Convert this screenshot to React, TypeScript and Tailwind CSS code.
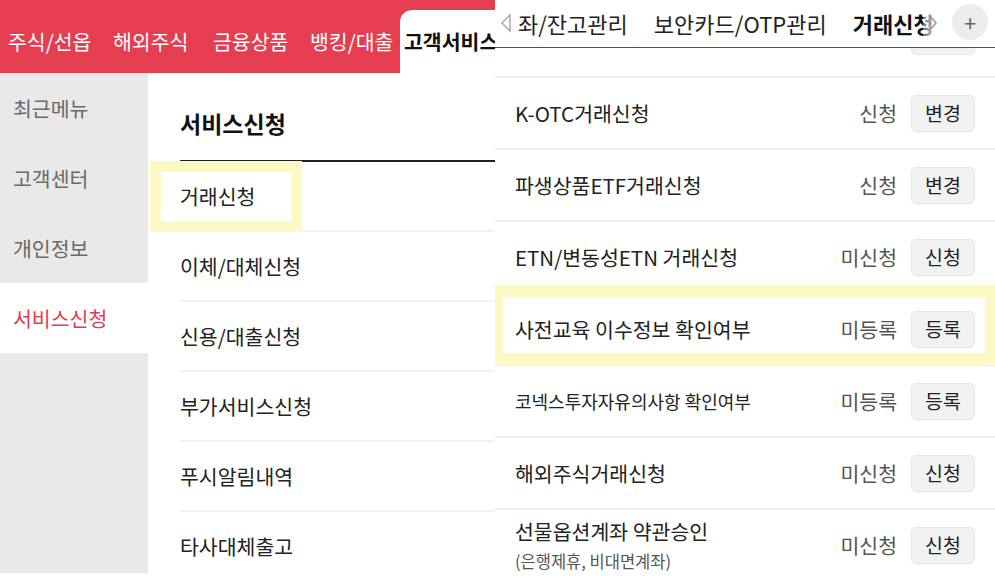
const topTabs = [
  { label: '주식/선옵', w: 'w-[105px]' },
  { label: '해외주식', w: 'w-[100px]' },
  { label: '금융상품', w: 'w-[97px]' },
  { label: '뱅킹/대출', w: 'w-[90px]' },
];
const sideMenu = ['최근메뉴', '고객센터', '개인정보', '서비스신청'];
const serviceMenu = ['거래신청', '이체/대체신청', '신용/대출신청', '부가서비스신청', '푸시알림내역', '타사대체출고'];

interface Row {
  name: string;
  status: string;
  btn: string;
  sub?: string;
  small?: boolean;
}

const rows: Row[] = [
  { name: '해외선물옵션거래신청', status: '신청', btn: '변경' },
  { name: 'K-OTC거래신청', status: '신청', btn: '변경' },
  { name: '파생상품ETF거래신청', status: '신청', btn: '변경' },
  { name: 'ETN/변동성ETN 거래신청', status: '미신청', btn: '신청' },
  { name: '사전교육 이수정보 확인여부', status: '미등록', btn: '등록' },
  { name: '코넥스투자자유의사항 확인여부', status: '미등록', btn: '등록', small: true },
  { name: '해외주식거래신청', status: '미신청', btn: '신청' },
  { name: '선물옵션계좌 약관승인', sub: '(은행제휴, 비대면계좌)', status: '미신청', btn: '신청' },
];

function LeftPanel() {
  return (
    <div className="relative w-[495px] shrink-0 flex flex-col overflow-hidden">
      {/* red top menu */}
      <div className="h-[73px] bg-[#e53e51] flex items-end pl-[8px] shrink-0">
        <div className="flex items-center h-[63px] text-white text-[20.5px] shrink-0">
          {topTabs.map((t) => (
            <span key={t.label} className={`${t.w} whitespace-nowrap`}>{t.label}</span>
          ))}
        </div>
        <div className="h-[63px] w-[140px] shrink-0 bg-white rounded-tl-[12px] flex items-center pl-[4px] text-[20.5px] font-bold text-[#111] whitespace-nowrap">
          고객서비스
        </div>
      </div>

      <div className="flex h-[500px]">
        <div className="w-[148px] shrink-0 bg-[#e9e9e9] flex flex-col">
          {sideMenu.map((m) => (
            <div
              key={m}
              className={`h-[70px] flex items-center pl-[13px] text-[20.5px] ${m === '서비스신청' ? 'bg-white text-[#e23c50]' : 'text-[#6a6a6a]'}`}
            >
              {m}
            </div>
          ))}
        </div>

        <div className="flex-1 pl-[32px]">
          <div className="h-[87px] flex items-center pt-[14px] text-[23px] font-bold text-[#111]">서비스신청</div>
          <div className="border-t-2 border-[#222]">
            {serviceMenu.map((s) => (
              <div key={s} className="h-[70px] flex items-center border-b-2 border-[#f1f1f1] text-[20.5px] text-[#222]">
                {s}
              </div>
            ))}
          </div>
        </div>
      </div>

      {/* highlight */}
      <div className="absolute left-[150px] top-[161px] w-[152px] h-[71px] border-[11px] border-[#fdf9c4]" />
    </div>
  );
}

function RightPanel() {
  return (
    <div className="relative flex-1 flex flex-col overflow-hidden">
      {/* tab bar */}
      <div className="relative z-10 h-[48px] shrink-0 bg-white border-b border-[#555] flex items-center overflow-hidden">
        <svg className="absolute left-[5px] top-[13px]" width="12" height="20" viewBox="0 0 12 20">
          <polygon points="10,2 2,10 10,18" fill="none" stroke="#aaa" strokeWidth="1.5" />
        </svg>
        <div className="flex items-center pl-[23px] gap-[26px] text-[22px] text-[#222] whitespace-nowrap">
          <span>좌/잔고관리</span>
          <span>보안카드/OTP관리</span>
          <span className="relative font-bold text-[#111]">
            거래신청
            <span className="absolute left-[-4px] right-[-6px] bottom-[-11px] h-[3px] bg-gradient-to-r from-[#111] from-75% to-transparent" />
          </span>
        </div>
        <div className="absolute left-[428px] top-[8px] w-[20px] h-[30px] bg-gradient-to-r from-white/40 to-white flex items-center justify-center">
          <svg width="10" height="18" viewBox="0 0 10 18">
            <polygon points="2,2 8,9 2,16" fill="none" stroke="#999" strokeWidth="1.5" />
          </svg>
        </div>
        <div className="absolute left-[457px] top-[4px] w-[36px] h-[36px] rounded-full bg-[#ececec] flex items-center justify-center text-[22px] text-[#666] leading-none">
          +
        </div>
      </div>

      {/* list */}
      <div className="flex-1 overflow-hidden">
        <div className="-mt-[42px]">
          {rows.map((r, i) => (
            <div
              key={r.name}
              className={`h-[72px] flex items-center pl-[20px] pr-[20px] border-b-2 border-[#efefef] ${i === 0 ? 'pb-[10px]' : ''}`}
            >
              <div className="flex-1 min-w-0">
                <div className={`${r.small ? 'text-[18px]' : 'text-[20.5px]'} text-[#222] leading-[28px] whitespace-nowrap`}>{r.name}</div>
                {r.sub && <div className="text-[16.5px] text-[#555] leading-[24px] mt-[4px]">{r.sub}</div>}
              </div>
              <span className="text-[20.5px] text-[#555] mr-[14px] whitespace-nowrap">{r.status}</span>
              <div className="w-[64px] h-[37px] rounded-[5px] bg-[#f2f2f2] border border-[#e6e6e6] flex items-center justify-center text-[19.5px] text-[#222]">
                {r.btn}
              </div>
            </div>
          ))}
        </div>
      </div>

      {/* highlight */}
      <div className="absolute left-0 top-[285px] w-[500px] h-[80px] border-y-[12px] border-l-[8px] border-r-[10px] border-[#fdf9c4]" />
    </div>
  );
}

export default function App() {
  return (
    <div className="flex w-[995px] h-[578px] overflow-hidden bg-white font-['Noto_Sans_CJK_KR','Noto_Sans',sans-serif]">
      <LeftPanel />
      <RightPanel />
    </div>
  );
}
